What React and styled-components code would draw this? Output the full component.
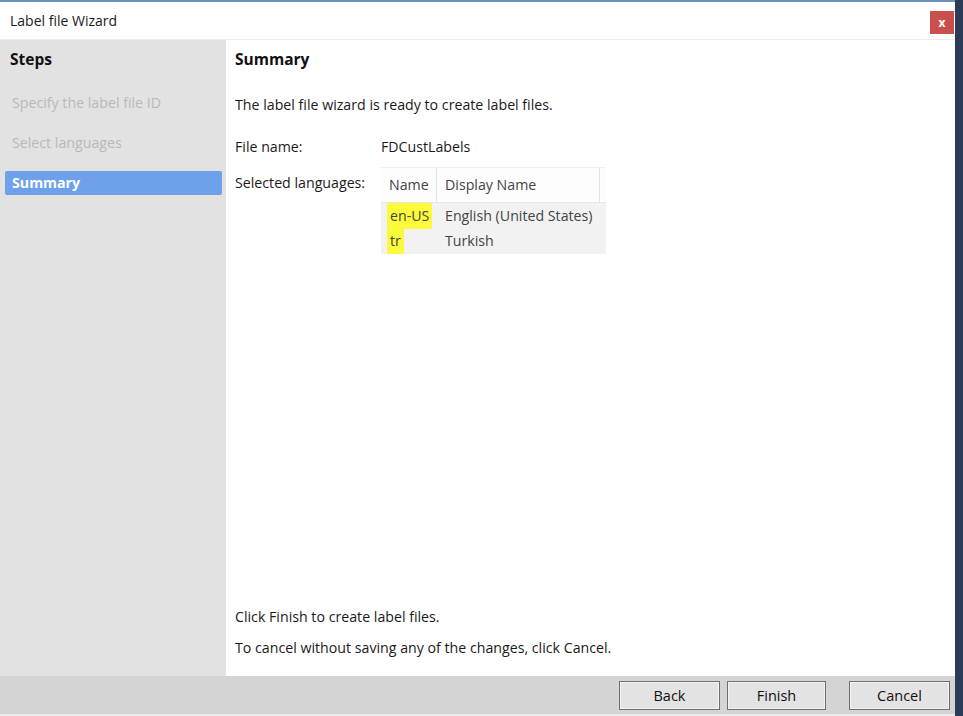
import React from "react";
import styled, { createGlobalStyle } from "styled-components";

const Global = createGlobalStyle`
  html, body { margin: 0; padding: 0; background: #2c3b58; }
  body { font-family: "Open Sans", "Noto Sans", sans-serif; }
  #root { width: 963px; height: 716px; }
`;

const Window = styled.div`
  width: 955px;
  height: 716px;
  background: #ffffff;
  border-top: 2px solid #6b8fba;
  box-sizing: border-box;
  display: flex;
  flex-direction: column;
`;

const TitleBar = styled.div`
  height: 37px;
  flex: none;
  display: flex;
  align-items: center;
  justify-content: space-between;
  padding: 0 0 0 10px;
  border-bottom: 1px solid #ececec;
  font-size: 14px;
  color: #1a1a1a;
`;

const CloseButton = styled.div`
  width: 24px;
  height: 23px;
  margin-right: 1px;
  margin-top: 4px;
  background: #c9504c;
  color: #fff;
  font-size: 12px;
  font-weight: 700;
  display: flex;
  align-items: center;
  justify-content: center;
  line-height: 1;
`;

const Body = styled.div`
  flex: 1;
  display: flex;
  min-height: 0;
`;

const Sidebar = styled.div`
  width: 226px;
  flex: none;
  background: #e2e2e2;
  padding: 8px 4px 0 5px;
  box-sizing: border-box;
  display: flex;
  flex-direction: column;
`;

const Heading = styled.div`
  font-weight: 700;
  font-size: 15.5px;
  color: #111;
  padding-left: ${p => p.$indent || 0}px;
  height: 22px;
  line-height: 22px;
`;

const StepList = styled.div`
  margin-top: 21px;
  display: flex;
  flex-direction: column;
  gap: 16px;
`;

const Step = styled.div`
  height: 24px;
  line-height: 24px;
  padding-left: 7px;
  font-size: 14.2px;
  border-radius: 2px;
  color: ${p => (p.$active ? "#ffffff" : "#b9b9b9")};
  background: ${p => (p.$active ? "#6ea1ea" : "transparent")};
  font-weight: ${p => (p.$active ? 700 : 400)};
`;

const Content = styled.div`
  flex: 1;
  padding: 8px 0 0 9px;
  display: flex;
  flex-direction: column;
  font-size: 14.2px;
  color: #1a1a1a;
`;

const Intro = styled.div`
  margin-top: 25px;
  height: 20px;
  line-height: 20px;
`;

const FieldRow = styled.div`
  display: grid;
  grid-template-columns: 146px auto;
  align-items: start;
  margin-top: ${p => p.$mt}px;
`;

const FieldLabel = styled.div`
  height: 20px;
  line-height: 20px;
`;

const Table = styled.div`
  width: 225px;
  background: #f2f2f2;
  margin-top: -6px;
  padding-bottom: 1px;
`;

const TableHead = styled.div`
  display: grid;
  grid-template-columns: 56px 163px 6px;
  height: 36px;
  background: #fdfdfd;
  border-bottom: 1px solid #e6e6e6;
  border-top: 1px solid #f0f0f0;
  box-sizing: border-box;
`;

const HeadCell = styled.div`
  line-height: 34px;
  padding-left: ${p => p.$pl ?? 8}px;
  color: #444;
  border-right: ${p => (p.$last ? "none" : "1px solid #e3e3e3")};
`;

const TableRow = styled.div`
  display: grid;
  grid-template-columns: 56px auto;
  height: 25px;
  line-height: 25px;
`;

const Cell = styled.div`
  padding-left: ${p => p.$pl || 6}px;
  color: #444;
`;

const Mark = styled.span`
  background: #fbfb3c;
  padding: 3px 3px 4px 3px;
  margin-left: -3px;
  border-radius: 2px;
`;

const Spacer = styled.div`
  flex: 1;
`;

const Note = styled.div`
  height: 20px;
  line-height: 20px;
  margin-bottom: ${p => p.$mb}px;
`;

const Footer = styled.div`
  height: 38px;
  flex: none;
  background: #d4d4d4;
  border-bottom: 2px solid #ebebeb;
  display: flex;
  align-items: center;
  justify-content: flex-end;
  padding-right: 5px;
  box-sizing: content-box;
`;

const Button = styled.div`
  width: ${p => p.$w}px;
  height: 29px;
  box-sizing: border-box;
  border: 1px solid #6f6f6f;
  box-shadow: inset 0 0 0 1px #f2f2f2;
  background: #e3e3e3;
  display: flex;
  align-items: center;
  justify-content: center;
  font-size: 14.5px;
  color: #111;
  margin-left: ${p => p.$ml}px;
  margin-top: 1px;
`;

export default function App() {
  return (
    <>
      <Global />
      <Window>
        <TitleBar>
          <span>Label file Wizard</span>
          <CloseButton>x</CloseButton>
        </TitleBar>
        <Body>
          <Sidebar>
            <Heading $indent={5}>Steps</Heading>
            <StepList>
              <Step>Specify the label file ID</Step>
              <Step>Select languages</Step>
              <Step $active>Summary</Step>
            </StepList>
          </Sidebar>
          <Content>
            <Heading>Summary</Heading>
            <Intro>The label file wizard is ready to create label files.</Intro>
            <FieldRow $mt={22}>
              <FieldLabel>File name:</FieldLabel>
              <FieldLabel>FDCustLabels</FieldLabel>
            </FieldRow>
            <FieldRow $mt={16}>
              <FieldLabel>Selected languages:</FieldLabel>
              <Table>
                <TableHead>
                  <HeadCell>Name</HeadCell>
                  <HeadCell>Display Name</HeadCell>
                  <HeadCell $pl={0} $last />
                </TableHead>
                <TableRow>
                  <Cell $pl={9}><Mark>en-US</Mark></Cell>
                  <Cell $pl={8}>English (United States)</Cell>
                </TableRow>
                <TableRow>
                  <Cell $pl={9}><Mark>tr</Mark></Cell>
                  <Cell $pl={8}>Turkish</Cell>
                </TableRow>
              </Table>
            </FieldRow>
            <Spacer />
            <Note $mb={11}>Click Finish to create label files.</Note>
            <Note $mb={18}>To cancel without saving any of the changes, click Cancel.</Note>
          </Content>
        </Body>
        <Footer>
          <Button $w={101} $ml={0}>Back</Button>
          <Button $w={99} $ml={7}>Finish</Button>
          <Button $w={101} $ml={23}>Cancel</Button>
        </Footer>
      </Window>
    </>
  );
}
